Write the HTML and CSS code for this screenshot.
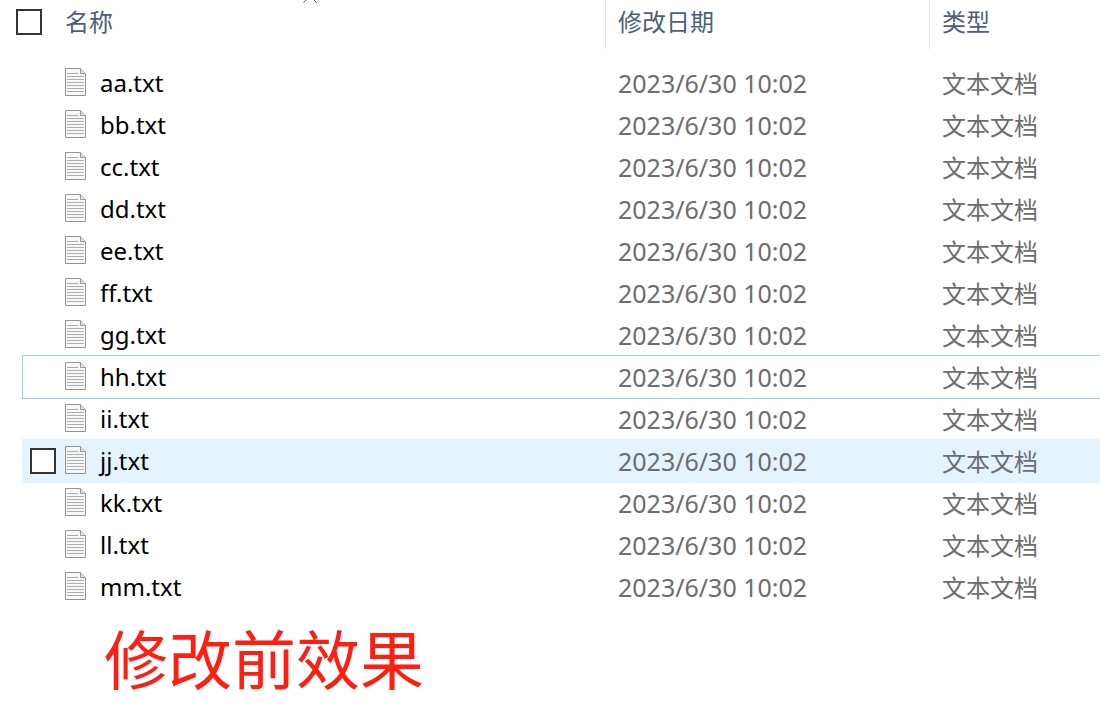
FILE: index.html
```
<!DOCTYPE html>
<html lang="zh-CN">
<head>
<meta charset="utf-8">
<title>修改前效果</title>
<link rel="stylesheet" href="styles.css">
</head>
<body>
<svg class="defs" width="0" height="0" aria-hidden="true">
  <symbol id="doc" viewBox="0 0 21 28">
    <path d="M.5.5H15.500L20.500 5.500V27.500H.5Z" fill="#f8f8f8" stroke="#969696"/>
    <path d="M15.500.5V5.500H20.500" fill="#e2e2e2" stroke="#969696"/>
    <path d="M2 5.500H13M2 8.500H19M2 11.500H19M2 14.500H19M2 17.500H19M2 20.500H19M2 23.500H19" stroke="#adadad" fill="none"/>
  </symbol>
</svg>
<main>
<table class="files">
  <thead>
    <tr class="head">
      <th class="head-name"><input type="checkbox" class="check" aria-label="全选"><span class="head-text">名称</span>
        <svg class="sort" width="14" height="9" viewBox="0 0 14 9" aria-hidden="true"><path d="M.5 8.500L7 2L13.500 8.500" fill="none" stroke="#555"/></svg></th>
      <th class="head-cell"><span class="head-text">修改日期</span></th>
      <th class="head-cell"><span class="head-text">类型</span></th>
    </tr>
  </thead>
  <tbody>
    <tr class="row"><td class="name"><svg class="icon"><use href="#doc"/></svg>aa.txt</td><td class="date">2023/6/30 10:02</td><td class="type">文本文档</td></tr>
    <tr class="row"><td class="name"><svg class="icon"><use href="#doc"/></svg>bb.txt</td><td class="date">2023/6/30 10:02</td><td class="type">文本文档</td></tr>
    <tr class="row"><td class="name"><svg class="icon"><use href="#doc"/></svg>cc.txt</td><td class="date">2023/6/30 10:02</td><td class="type">文本文档</td></tr>
    <tr class="row"><td class="name"><svg class="icon"><use href="#doc"/></svg>dd.txt</td><td class="date">2023/6/30 10:02</td><td class="type">文本文档</td></tr>
    <tr class="row"><td class="name"><svg class="icon"><use href="#doc"/></svg>ee.txt</td><td class="date">2023/6/30 10:02</td><td class="type">文本文档</td></tr>
    <tr class="row"><td class="name"><svg class="icon"><use href="#doc"/></svg>ff.txt</td><td class="date">2023/6/30 10:02</td><td class="type">文本文档</td></tr>
    <tr class="row"><td class="name"><svg class="icon"><use href="#doc"/></svg>gg.txt</td><td class="date">2023/6/30 10:02</td><td class="type">文本文档</td></tr>
    <tr class="row focused"><td class="name"><svg class="icon"><use href="#doc"/></svg>hh.txt</td><td class="date">2023/6/30 10:02</td><td class="type">文本文档</td></tr>
    <tr class="row"><td class="name"><svg class="icon"><use href="#doc"/></svg>ii.txt</td><td class="date">2023/6/30 10:02</td><td class="type">文本文档</td></tr>
    <tr class="row hovered"><td class="name"><input type="checkbox" class="check" id="jj"><svg class="icon"><use href="#doc"/></svg><label for="jj">jj.txt</label></td><td class="date">2023/6/30 10:02</td><td class="type">文本文档</td></tr>
    <tr class="row"><td class="name"><svg class="icon"><use href="#doc"/></svg>kk.txt</td><td class="date">2023/6/30 10:02</td><td class="type">文本文档</td></tr>
    <tr class="row"><td class="name"><svg class="icon"><use href="#doc"/></svg>ll.txt</td><td class="date">2023/6/30 10:02</td><td class="type">文本文档</td></tr>
    <tr class="row"><td class="name"><svg class="icon"><use href="#doc"/></svg>mm.txt</td><td class="date">2023/6/30 10:02</td><td class="type">文本文档</td></tr>
  </tbody>
</table>
<p class="caption">修改前效果</p>
</main>
</body>
</html>
```
FILE: styles.css
```
* { box-sizing: border-box; }
body {
  margin: 0;
  background: #fff;
  color: #000;
  font-family: "Noto Sans", "Noto Sans CJK SC", sans-serif;
  font-size: 24px;
  line-height: 32px;
}
.defs { position: absolute; }
.files, .files thead, .files tbody { display: block; }
.head, .row {
  display: grid;
  grid-template-columns: 1fr 324px 171px;
}
.head { margin-bottom: 13px; }
.head th {
  height: 49px;
  padding: 0 0 5px;
  display: flex;
  align-items: center;
  text-align: left;
  font-family: "Noto Sans CJK SC", sans-serif;
  font-weight: 400;
  color: #4c607a;
}
.head .head-name { position: relative; padding-left: 16px; gap: 23px; }
.head .head-cell { padding-left: 12px; border-left: 1px solid #e2e2e2; }
.head-text { padding-bottom: 2px; }
.sort { position: absolute; left: 50%; top: -6px; }
.check {
  appearance: none;
  flex: none;
  width: 26px;
  height: 26px;
  margin: 0;
  border: 2px solid #333;
  background: #fff;
}
.row { height: 42px; margin-left: 23px; }
.row td { padding: 0 0 1px; display: flex; align-items: center; }
.row .name { padding: 0 0 0 42px; }
.icon { flex: none; width: 21px; height: 28px; margin: 0 14px 2px 0; }
.row .date { padding-left: 13px; color: #6d6d6d; font-size: 25px; }
.row .type {
  padding-left: 13px;
  color: #6d6d6d;
  font-family: "Noto Sans CJK SC", sans-serif;
}
.focused { outline: 1px solid #99d1ff; }
.hovered { background: #e5f3ff; outline: 1px solid #e5f3ff; }
.hovered .name { padding-left: 7px; }
.hovered .check { margin-right: 9px; }
.caption {
  margin: 8px 0 0;
  padding-left: 104px;
  font-family: "Noto Sans CJK SC", sans-serif;
  font-size: 64px;
  font-weight: 400;
  line-height: 80px;
  color: #ff1e10;
}
```
